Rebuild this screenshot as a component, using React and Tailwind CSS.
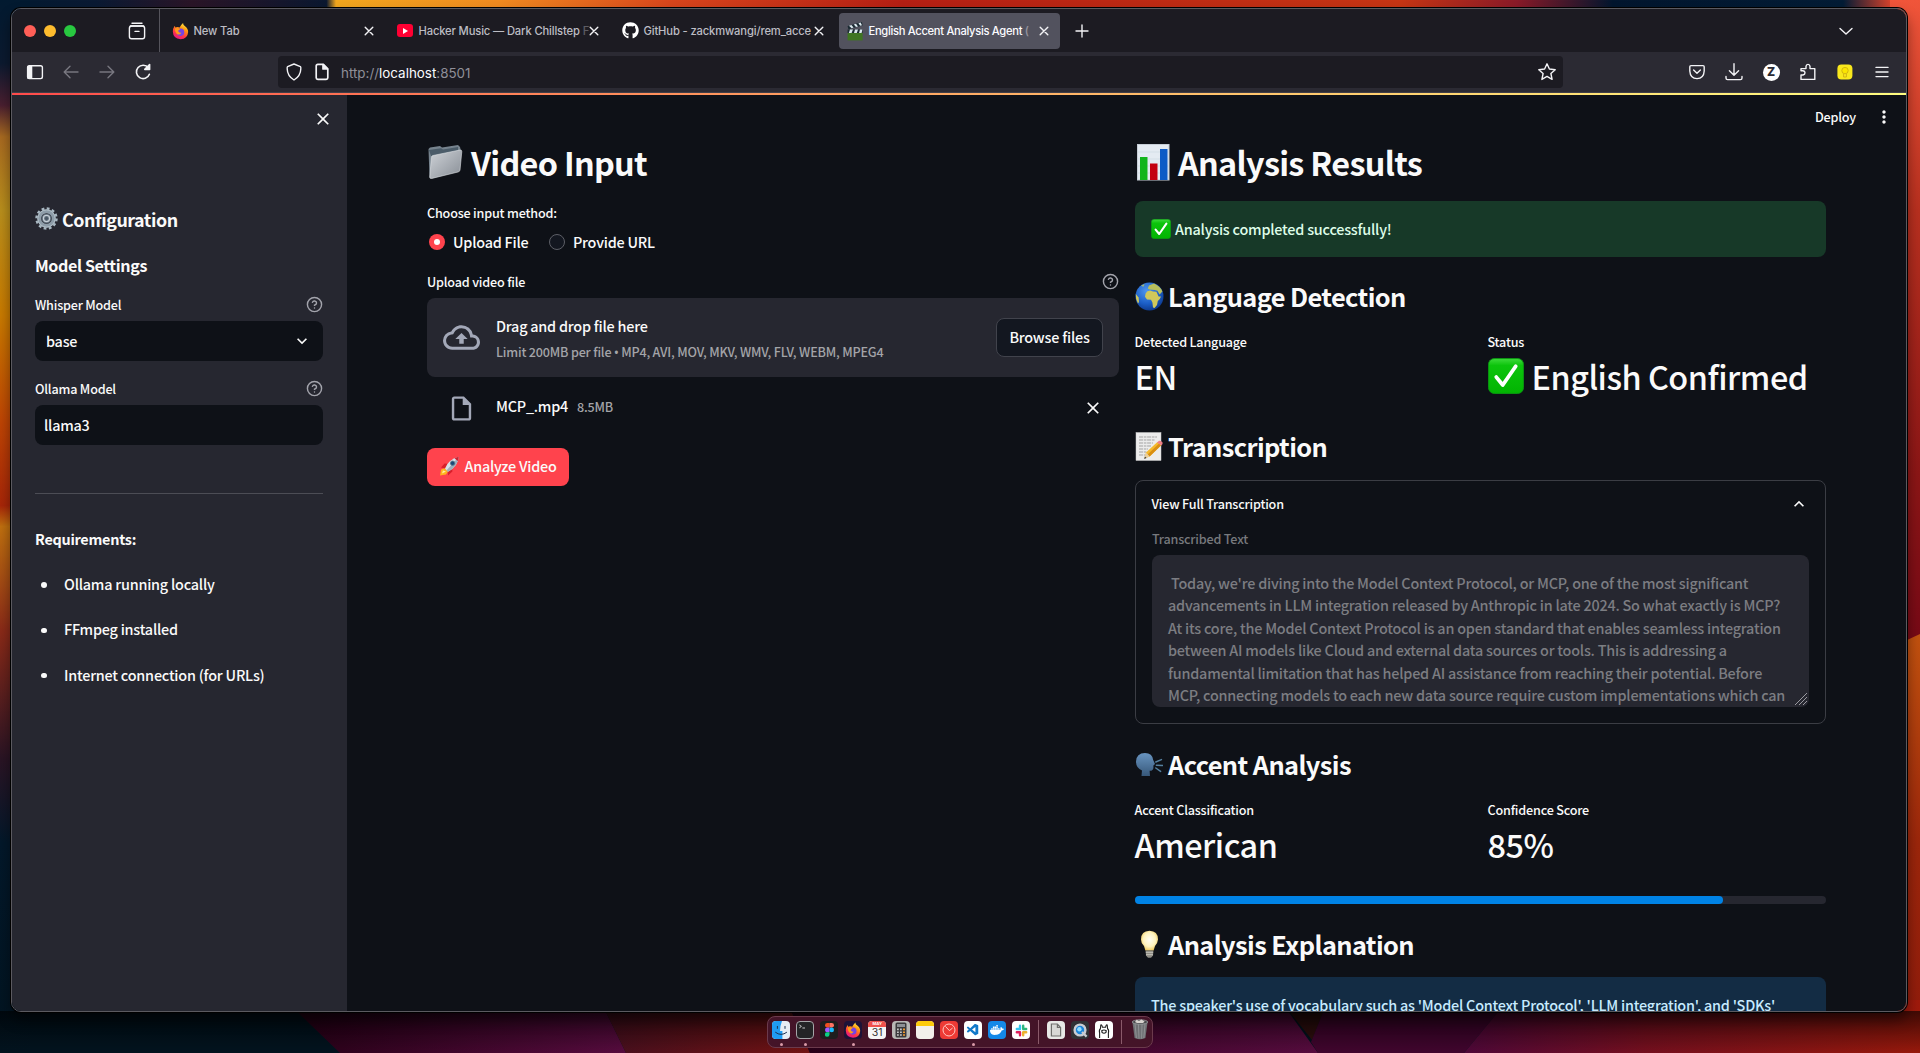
import React from "react";
import { FaGithub } from "react-icons/fa";
import { FiHelpCircle } from "react-icons/fi";
import { MdOutlineCloudUpload, MdOutlineInsertDriveFile, MdClose, MdMoreVert, MdExpandMore, MdExpandLess } from "react-icons/md";
import { SiDocker } from "react-icons/si";
import { VscVscode } from "react-icons/vsc";

/* ---------- emoji drawings ---------- */
const Gear = () => (
  <svg width="23" height="23" viewBox="0 0 24 24" className="shrink-0">
    <circle cx="12" cy="12" r="10.4" fill="none" stroke="#a9b8c2" strokeWidth="2.6" strokeDasharray="2.9 2.54" />
    <circle cx="12" cy="12" r="7.6" fill="none" stroke="#8d9ca8" strokeWidth="4.2" />
    <circle cx="12" cy="12" r="9" fill="none" stroke="#b4c1ca" strokeWidth="1" />
    <circle cx="12" cy="12" r="5" fill="#5f6e7b" />
    <circle cx="12" cy="12" r="3.2" fill="none" stroke="#c5ced6" strokeWidth="1.3" />
    <circle cx="12" cy="12" r="1.5" fill="#4a5764" />
  </svg>
);
const Folder = () => (
  <svg width="36" height="36" viewBox="0 0 36 36" className="shrink-0">
    <defs>
      <linearGradient id="fo" x1="0" y1="0" x2="1" y2="1">
        <stop offset="0" stopColor="#cfd3d8" />
        <stop offset="1" stopColor="#878d95" />
      </linearGradient>
    </defs>
    <path d="M1.5 5 L3 3.4 L13 2 L15 3.6 L31 1 L33 3 L34 7 L4 33 L2.5 34 Z" fill="#76838e" />
    <path d="M2 6 L14 4.2 L16 5.6 L31 3 L31 8 L4 12 Z" fill="#4b5c69" />
    <path d="M6 11.5 L33 6 Q35 5.8 34.8 7.6 L33 26 Q32.8 27.6 31 28 L5 34.4 Q2.6 35 2.8 33 L4.4 13.4 Q4.6 11.8 6 11.5 Z" fill="url(#fo)" stroke="#dfe3e6" strokeWidth=".6" />
  </svg>
);
const Chart = () => (
  <svg width="33" height="37" viewBox="0 0 33 37" className="shrink-0">
    <rect x="0.5" y="0.5" width="31.5" height="35.5" fill="#e4ebf2" stroke="#c6ced6" />
    <path d="M1 8H32M1 15H32M1 22H32M1 29H32" stroke="#cfdae4" strokeWidth=".7" />
    <rect x="3" y="13" width="7.5" height="23" fill="#12b51c" />
    <rect x="13" y="19.5" width="7.5" height="16.5" fill="#c3000f" />
    <rect x="23" y="5" width="7.5" height="31" fill="#0c5bc6" />
  </svg>
);
const Check = ({ className }) => (
  <svg viewBox="0 0 20 20" className={className}>
    <defs>
      <linearGradient id="ck" x1="0" y1="0" x2="0" y2="1">
        <stop offset="0" stopColor="#3fdb3c" />
        <stop offset=".2" stopColor="#0cc40c" />
        <stop offset="1" stopColor="#02b402" />
      </linearGradient>
    </defs>
    <rect x=".3" y=".3" width="19.4" height="19.4" rx="3.2" fill="url(#ck)" stroke="#0a9a12" strokeWidth=".5" />
    <path d="M4.6 10.6 L8.2 15 L15.4 4.6" fill="none" stroke="#fff" strokeWidth="2.1" strokeLinecap="round" strokeLinejoin="round" />
  </svg>
);
const Globe = () => (
  <svg width="29" height="29" viewBox="0 0 29 29" className="shrink-0">
    <defs>
      <radialGradient id="gl" cx=".4" cy=".3" r=".75">
        <stop offset="0" stopColor="#4f97ee" />
        <stop offset=".6" stopColor="#1c5fc8" />
        <stop offset="1" stopColor="#0c3688" />
      </radialGradient>
    </defs>
    <circle cx="14.5" cy="14.5" r="14" fill="url(#gl)" />
    <path d="M10.6 11.4 Q12 8.8 15 8.6 L18 9.6 L21.4 9.8 L23.6 14.4 L26 14.6 Q25.2 17.4 22.8 19 L22 23 L19.6 26 L18 25.6 L17.4 20.4 L16 17.8 L12 17.6 L10 14.8 Z" fill="#d0c85a" />
    <path d="M14 3.4 L19 1.6 Q25 4 27.4 9.4 L24.6 12.6 L22.4 8.8 L19.6 8 L14.6 7.6 L12.8 6.6 Z" fill="#b9c05c" />
    <path d="M.8 12 L3.6 15.6 L4 20 L3 21.4 Q.4 17 .8 12 Z" fill="#d0c85a" />
    <path d="M6 3.8 L9.6 2 L8.4 4.8 Z" fill="#a9bd6e" />
  </svg>
);
const Memo = () => (
  <svg width="28" height="29" viewBox="0 0 28 29" className="shrink-0">
    <rect x="1" y=".5" width="25" height="28" fill="#ececec" stroke="#c9c9c9" strokeWidth=".5" />
    <path d="M4 5H22M4 8H20M4 11H18M4 14H16M4 17H13M4 20H12M4 23H10" stroke="#a3a3a3" strokeWidth="1" strokeDasharray="4 .8 2.6 .7" />
    <path d="M9.4 26.6 L11 20.6 L22.4 10 L26 13.6 L14.6 24.6 Z" fill="#f5b92d" />
    <path d="M12.6 22.6 L24 11.6 L26 13.6 L14.6 24.6 Z" fill="#d98f13" />
    <path d="M22 10.4 L24 8.8 Q26 8.4 27.6 10.4 Q28 12 26.4 13.6 Z" fill="#ee7f86" />
    <path d="M9.4 26.6 L11 20.6 L14.6 24.6 Z" fill="#e9cfa0" />
    <path d="M9.2 27 L9.9 24.4 L11.5 25.9 Z" fill="#333" />
  </svg>
);
const Speaking = () => (
  <svg width="28" height="25" viewBox="0 0 28 25" className="shrink-0">
    <defs>
      <linearGradient id="sp" x1="0" y1="0" x2="0" y2="1">
        <stop offset="0" stopColor="#6894c0" />
        <stop offset="1" stopColor="#37587a" />
      </linearGradient>
    </defs>
    <path d="M6.5 24 L7 18.6 Q1 16 1 9.6 Q1.4 1 10 1 Q17.4 1.2 18.2 8 L20 12 L18.4 13.4 L18.4 16 Q18 19 14.6 18.8 L15 24 Z" fill="url(#sp)" />
    <path d="M20.8 10 L26.4 7.6 M21.4 13.2 L27.6 13.4 M20.8 16 L25.6 19.4" stroke="#55809f" strokeWidth="1.5" strokeLinecap="round" />
  </svg>
);
const Bulb = () => (
  <svg width="19" height="29" viewBox="0 0 19 29" className="shrink-0">
    <defs>
      <radialGradient id="bu" cx=".5" cy=".45" r=".6">
        <stop offset="0" stopColor="#fffef4" />
        <stop offset=".6" stopColor="#fff3bd" />
        <stop offset="1" stopColor="#ecc350" />
      </radialGradient>
    </defs>
    <path d="M9.5 .8 Q18 1.2 18 9.4 Q17.6 13.4 15 16 L13.6 20.4 H5.4 L4 16 Q1 13.4 1 9.4 Q1 1.2 9.5 .8Z" fill="url(#bu)" />
    <path d="M5.6 20.4 H13.4 L13 25.6 L11 27.8 H8 L6 25.6 Z" fill="#8f8d86" />
    <path d="M5.8 22.4H13.2M6 24.6H13" stroke="#cbc9c0" strokeWidth=".8" />
  </svg>
);
const Rocket = () => (
  <svg width="21" height="20" viewBox="0 0 21 20" className="shrink-0">
    <path d="M1 19.6 L2.2 13.4 L6 12 L9 15.6 L7 18.6 Z" fill="#ffb41f" />
    <path d="M3 17.6 L4 14.4 L7 15.6 Z" fill="#fff0a0" />
    <path d="M2 11.6 L5.6 7.6 L9.4 7.8 L6.4 12.4 Z M9 19.4 L13.4 15.6 L13.2 11.6 L8.8 15 Z" fill="#d81f2b" />
    <path d="M6 12.6 Q9 3.6 19.8 .8 Q18.8 10.6 9 15.8 Z" fill="#d8e2ea" />
    <path d="M9 15.8 Q18.8 10.6 19.8 .8 L7.6 14.2Z" fill="#9fb0bd" />
    <path d="M15.6 2.4 Q18 1 19.8 .8 Q19.6 3 18.8 5 Z" fill="#c92332" />
    <circle cx="13.6" cy="7.2" r="2.2" fill="#1b4a78" stroke="#64798a" strokeWidth=".8" />
  </svg>
);

/* ---------- app marks ---------- */
const Firefox = ({ className, id }) => (
  <svg viewBox="0 0 20 20" className={className}>
    <defs>
      <linearGradient id={id} x1=".8" y1="0" x2=".3" y2="1">
        <stop offset="0" stopColor="#fff44f" />
        <stop offset=".35" stopColor="#ff980e" />
        <stop offset=".7" stopColor="#ff3647" />
        <stop offset="1" stopColor="#e31587" />
      </linearGradient>
    </defs>
    <path d="M13 .6 Q13 3 15 4.2 Q19 7 19 11.2 Q18.4 19.4 10 19.6 Q1.4 19.2 1 11 Q.8 7 3.2 3.8 L4 6 L6 5.2 Q8 5 9 6 Q10.6 2.6 13 .6Z" fill={`url(#${id})`} />
    <circle cx="10" cy="11.4" r="4.4" fill="#7543e5" />
    <path d="M3.4 7 Q7 5.6 9.6 8.2 Q7.6 8.6 7.2 10 Q8 12.6 11 12 Q9.6 15 6.6 14 Q3.4 12 3.4 7Z" fill="#ff9a1a" />
  </svg>
);
const Clapper = () => (
  <svg width="16" height="20" viewBox="0 0 16 20" className="shrink-0">
    <path d="M.6 5 L15 1 L15.6 4.4 L1.4 8.2 Z" fill="#1c2b33" />
    <path d="M2 4.8 L4.6 7.2 L6.6 6.6 L4.4 4 Z M6.8 3.4 L9 6 L11 5.4 L9 2.8 Z M11.4 2.2 L13.2 4.8 L15 4.2 L13.6 1.6 Z" fill="#dbe8ee" />
    <path d="M.6 8.4 H15.6 V12 H.6 Z" fill="#1c2b33" />
    <path d="M3 8.4 H6 L4.6 12 H1.8 Z M8 8.4 H11 L9.8 12 H7 Z M13 8.4 H15.4 L14.6 12 H12 Z" fill="#dbe8ee" />
    <rect x=".6" y="12" width="15" height="7.4" fill="#3f7522" />
  </svg>
);

/* ---------- browser chrome ---------- */
const Stroke = ({ size = 20, children, color = "#f3f3f6", w = 1.4 }) => (
  <svg width={size} height={size} viewBox="0 0 20 20" fill="none" stroke={color} strokeWidth={w} strokeLinecap="round" strokeLinejoin="round" className="shrink-0">
    {children}
  </svg>
);
const X = ({ s = 12 }) => (
  <svg width={s} height={s} viewBox="0 0 12 12" className="shrink-0" stroke="#f3f3f6" strokeWidth="1.4" strokeLinecap="round">
    <path d="M2.2 2.2 L9.8 9.8 M9.8 2.2 L2.2 9.8" />
  </svg>
);
const Tab = ({ icon, title, fade, active, className = "" }) => (
  <div className={`flex h-9 shrink-0 items-center rounded-[4px] ${active ? "w-[221px] bg-[#52525e] pl-2 pr-[10px]" : "w-[225px] pl-[9px] pr-[13px]"} ${className}`}>
    <span className="flex w-4 shrink-0 justify-center">{icon}</span>
    <span
      className={`ml-[5.5px] min-w-0 flex-1 whitespace-nowrap text-[11.2px] font-medium leading-5 ${
        active ? "tracking-[-0.028em] text-[#fbfbfe]" : "tracking-[-0.012em] text-[#bdbdc4]"
      }`}
    >
      {title}
      {fade && <span className="opacity-40">{fade}</span>}
    </span>
    <X />
  </div>
);

const TabBar = () => (
  <div className="flex h-[43px] items-center bg-[#1c1b22] font-[Inter,sans-serif]">
    <div className="ml-3 flex gap-[8px]">
      <i className="size-3 rounded-full bg-[#ff5f57]" />
      <i className="size-3 rounded-full bg-[#febc2e]" />
      <i className="size-3 rounded-full bg-[#28c840]" />
    </div>
    <div className="ml-[51px] flex w-5 justify-center">
      <Stroke>
        <path d="M5 2.2 H15 M3.4 5 H16.6" />
        <rect x="2.4" y="5" width="15.2" height="12.8" rx="2.2" />
        <path d="M8 10.4 H12" />
      </Stroke>
    </div>
    <div className="ml-[12px] h-full w-px bg-[#55545c]" />
    <div className="flex items-center pl-[4px]">
      <Tab title="New Tab" icon={<Firefox id="fx1" className="h-5 w-[17px] shrink-0" />} className="ml-[-1px]" />
      <Tab
        title="Hacker Music — Dark Chillstep"
        fade={" F"}
        icon={
          <span className="flex h-[13px] w-4 shrink-0 items-center justify-center rounded-[3px] bg-[#ff0033]">
            <svg width="5" height="6" viewBox="0 0 5 6"><path d="M0 0 L5 3 L0 6Z" fill="#fff" /></svg>
          </span>
        }
      />
      <Tab title="GitHub - zackmwangi/rem_acce" icon={<FaGithub size={17} color="#fff" className="shrink-0" />} />
      <Tab active title="English Accent Analysis Agent" fade=" (" icon={<Clapper />} className="ml-px" />
    </div>
    <div className="ml-3">
      <Stroke><path d="M10 4 V16 M4 10 H16" /></Stroke>
    </div>
    <div className="ml-auto mr-[50px]">
      <Stroke><path d="M4 7.4 L10 13 L16 7.4" /></Stroke>
    </div>
  </div>
);

const Toolbar = () => (
  <div className="flex h-10 items-center bg-[#2b2a33] font-[Inter,sans-serif]">
    <div className="flex w-[266px] shrink-0 items-center gap-[16px] pl-[13px]">
      <Stroke>
        <rect x="2.6" y="3.8" width="14.8" height="12.8" rx="1.8" />
        <path d="M3 4.4 H6.6 V16 H3 Z" fill="#f3f3f6" />
      </Stroke>
      <Stroke color="#77767f"><path d="M17 10 H3.4 M9 4.2 L3.2 10 L9 15.8" /></Stroke>
      <Stroke color="#77767f"><path d="M3 10 H16.6 M11 4.2 L16.8 10 L11 15.8" /></Stroke>
      <Stroke w={1.6}>
        <path d="M16.4 12.2 A6.7 6.7 0 1 1 15.4 5.8" />
        <path d="M16.6 2.6 V7.4 H11.8 Z" fill="#f3f3f6" />
      </Stroke>
    </div>
    <div className="flex h-8 w-[1285px] shrink-0 items-center rounded-[4px] bg-[#1c1b22] pl-[6px] pr-[6px]">
      <Stroke><path d="M10 2 L16.4 4.6 Q17 5 16.8 7 Q16.6 14 10 18 Q3.4 14 3.2 7 Q3 5 3.6 4.6 Z" /></Stroke>
      <span className="w-2" />
      <Stroke w={1.7}>
        <path d="M5.8 2.4 H11.4 L15.8 6.8 V15.8 Q15.8 17.4 14.2 17.4 H5.8 Q4.2 17.4 4.2 15.8 V4 Q4.2 2.4 5.8 2.4 Z" />
        <path d="M11 2.6 V7 H15.4 Z" fill="#f3f3f6" />
      </Stroke>
      <span className="ml-[9px] mt-0.5 flex-1 whitespace-nowrap text-[13.4px] leading-5 text-[#8f8f98]">
        http://<span className="text-[#fbfbfe]">localhost</span>:8501
      </span>
      <Stroke><path d="M10 1.8 L12.4 7 L18.2 7.7 L13.9 11.5 L15.1 17.4 L10 14.4 L4.9 17.4 L6.1 11.5 L1.8 7.7 L7.6 7 Z" /></Stroke>
    </div>
    <div className="ml-auto mr-[14px] flex items-center gap-[17px]">
      <Stroke>
        <path d="M4 3.6 H16 Q17.2 3.6 17.2 4.8 V9 Q16.8 16.4 10 16.6 Q3.2 16.4 2.8 9 V4.8 Q2.8 3.6 4 3.6 Z M6.6 8 L10 11.2 L13.4 8" />
      </Stroke>
      <Stroke><path d="M10 1.8 V13 M5.4 8.8 L10 13.2 L14.6 8.8 M2 14.4 V16 Q2 17.6 3.6 17.6 H16.4 Q18 17.6 18 16 V14.4" /></Stroke>
      <span className="mx-[1.5px] flex size-[17px] items-center justify-center rounded-full bg-white text-[12px] font-extrabold leading-none text-[#2b2a33]">Z</span>
      <Stroke>
        <path d="M3 17.4 V13 H5 Q7 12.6 7 10.8 Q7 9 5 8.8 H3 V6.6 H8 V4.4 Q8.2 2.4 10 2.4 Q11.8 2.4 12 4.4 V6.6 H16.8 V17.4 Z" />
      </Stroke>
      <svg width="20" height="20" viewBox="0 0 20 20">
        <rect x="2.4" y="2.4" width="15" height="15" rx="4" fill="#f9e81c" />
        <circle cx="10" cy="8.6" r="3.2" fill="#fbe500" stroke="#d3b512" strokeWidth="1" />
        <path d="M8.6 12 V15 H11.4 V12" fill="none" stroke="#d3b512" strokeWidth="1" />
      </svg>
      <Stroke><path d="M4 5.4 H16 M4 10 H16 M4 14.6 H16" /></Stroke>
    </div>
  </div>
);

/* ---------- page ---------- */
const Help = () => <FiHelpCircle size={17} className="mt-[-1px] shrink-0 text-[#a3a4ac]" />;

const Sidebar = () => (
  <aside className="flex w-[335px] shrink-0 flex-col bg-[#262730] pl-[23px] pr-6">
    <div className="mt-[14px] flex h-5 justify-end">
      <MdClose size={20} className="mr-[-10px] text-[#fafafa]" />
    </div>
    <h2 className="mt-[75px] flex h-7 items-center whitespace-nowrap text-[17.9px] font-bold leading-7">
      <Gear />
      <span className="ml-1 mt-0.5 tracking-[-0.026em]!">Configuration</span>
    </h2>
    <h3 className="mt-[21px] flex h-6 items-center text-[16.1px] font-bold leading-6 tracking-[-0.024em]!">Model Settings</h3>
    <div className="mt-[18px] flex h-5 items-center justify-between text-[12.6px]">
      <span>Whisper Model</span>
      <Help />
    </div>
    <div className="mt-[6px] flex h-10 items-center justify-between rounded-lg bg-[#0e1117] pl-[11px] pr-[11px] text-[14.4px]">
      <span>base</span>
      <MdExpandMore size={20} />
    </div>
    <div className="mt-[18px] flex h-5 items-center justify-between text-[12.6px]">
      <span>Ollama Model</span>
      <Help />
    </div>
    <div className="mt-[6px] flex h-10 items-center rounded-lg bg-[#0e1117] pl-[9px] text-[14.4px]"><span>llama3</span></div>
    <div className="mt-12 h-px bg-[#4c4d55]" />
    <p className="mt-[33px] flex h-6 items-center text-[14.4px] font-bold tracking-[-0.018em]!">Requirements:</p>
    <ul className="mt-[21px] flex flex-col gap-[21.3px] text-[14.4px] leading-6">
      {["Ollama running locally", "FFmpeg installed", "Internet connection (for URLs)"].map((t) => (
        <li key={t} className="flex h-6 items-center pl-[6px]">
          <i className="mr-[17.5px] mt-0.5 size-[5.5px] rounded-full bg-[#fafafa]" />
          {t}
        </li>
      ))}
    </ul>
  </aside>
);

const VideoInput = () => (
  <section className="w-[692px] shrink-0">
    <h1 className="flex h-11 items-center whitespace-nowrap text-[32.4px] font-bold leading-[44px]">
      <Folder />
      <span className="ml-[8px] tracking-[-0.022em]!">Video Input</span>
    </h1>
    <p className="mt-[19px] flex h-5 items-center text-[12.6px]">Choose input method:</p>
    <div className="mt-[7px] flex h-6 items-center text-[14.4px]">
      <span className="ml-[2px] flex size-4 items-center justify-center rounded-full bg-[#ff434d]">
        <i className="size-[6px] rounded-full bg-white" />
      </span>
      <span className="ml-2 w-[96px]">Upload File</span>
      <span className="size-4 rounded-full border border-[#5d5f67] bg-[#131720]" />
      <span className="ml-2">Provide URL</span>
    </div>
    <div className="mt-[18px] flex h-5 items-center justify-between text-[12.6px]">
      <span>Upload video file</span>
      <Help />
    </div>
    <div className="mt-[6px] flex h-[79px] items-center rounded-lg bg-[#262730] px-4">
      <MdOutlineCloudUpload size={37} className="mt-[-1px] shrink-0 text-[#a3a8b8]" />
      <div className="ml-4 flex-1">
        <p className="flex h-6 items-center text-[14.4px]">Drag and drop file here</p>
        <p className="mt-1 h-5 whitespace-nowrap text-[12.6px] leading-5 text-[#a3a4a8]">
          Limit 200MB per file <span className="font-['Noto_Sans']">•</span> MP4, AVI, MOV, MKV, WMV, FLV, WEBM, MPEG4
        </p>
      </div>
      <button className="flex h-[39px] w-[107px] items-center justify-center whitespace-nowrap rounded-lg border border-[#41434c] bg-[#131720] pb-0.5 text-[14.4px]">
        Browse files
      </button>
    </div>
    <div className="mt-[11px] flex h-10 items-center pl-[20px] pr-4">
      <MdOutlineInsertDriveFile size={29} className="shrink-0 text-[#a3a8b8]" />
      <span className="ml-5 mt-[-4px] text-[14.4px]">MCP_.mp4</span>
      <span className="ml-[9px] mt-[-2px] text-[12.6px] text-[#a3a4a8]">8.5MB</span>
      <MdClose size={20} className="ml-auto" />
    </div>
    <button className="mt-5 flex h-[38px] w-[142px] items-center justify-center whitespace-nowrap rounded-lg bg-[#ff434d] pb-0.5 text-[14.4px]">
      <Rocket />
      <span className="ml-1">Analyze Video</span>
    </button>
  </section>
);

const Heading = ({ icon, children, className = "" }) => (
  <h2 className={`flex h-[34px] items-center whitespace-nowrap text-[25.4px] font-bold leading-[34px] ${className}`}>
    <span className="flex w-7 shrink-0 justify-center">{icon}</span>
    <span className="ml-[5px] tracking-[-0.024em]!">{children}</span>
  </h2>
);
const Metric = ({ label, children }) => (
  <div className="w-[353px] shrink-0 whitespace-nowrap">
    <p className="ml-[-0.5px] flex h-5 items-center text-[12.6px]">{label}</p>
    <p className="ml-[-0.5px] flex h-12 items-center text-[32.4px] leading-[48px]">{children}</p>
  </div>
);

const transcript = [
  "\u00a0Today, we're diving into the Model Context Protocol, or MCP, one of the most significant",
  "advancements in LLM integration released by Anthropic in late 2024. So what exactly is MCP?",
  "At its core, the Model Context Protocol is an open standard that enables seamless integration",
  "between AI models like Cloud and external data sources or tools. This is addressing a",
  "fundamental limitation that has helped AI assistance from reaching their potential. Before",
  "MCP, connecting models to each new data source require custom implementations which can",
];

const Results = () => (
  <section className="w-[691px] shrink-0">
    <h1 className="flex h-11 items-center whitespace-nowrap text-[32.4px] font-bold leading-[44px]">
      <span className="ml-[2px]"><Chart /></span>
      <span className="ml-[8px] tracking-[-0.022em]!">Analysis Results</span>
    </h1>
    <div className="mt-[17px] flex h-14 items-center rounded-lg bg-[#173928] px-4 text-[14.4px] text-[#dffde9]">
      <Check className="size-5 shrink-0" />
      <span className="ml-1 mt-[-1px]">Analysis completed successfully!</span>
    </div>
    <Heading icon={<Globe />} className="mt-[22px]">Language Detection</Heading>
    <div className="mt-[19px] flex">
      <Metric label="Detected Language">EN</Metric>
      <Metric label="Status">
        <Check className="size-9 shrink-0" />
        <span className="ml-2">English Confirmed</span>
      </Metric>
    </div>
    <Heading icon={<Memo />} className="mt-[29px]">Transcription</Heading>
    <div className="mt-[17px] h-[244px] rounded-lg border border-[#3b3d44] px-4">
      <div className="flex h-[46px] items-center justify-between text-[12.6px]">
        <span className="ml-[-0.5px]">View Full Transcription</span>
        <MdExpandLess size={20} />
      </div>
      <p className="mt-[2px] flex h-5 items-center text-[12.6px] text-[#77797d]">Transcribed Text</p>
      <div className="relative mt-[6px] h-[152px] overflow-hidden rounded-lg bg-[#262730] pl-4 pt-[17px] text-[14.4px] leading-[22.4px] text-[#7c7d82]">
        {transcript.map((l) => (
          <p key={l} className="whitespace-nowrap">{l}</p>
        ))}
        <svg className="absolute bottom-0.5 right-0.5" width="12" height="12" viewBox="0 0 12 12" stroke="#9a9aa0" strokeWidth="1">
          <path d="M0 12 L12 0 M4 12 L12 4 M8 12 L12 8" />
        </svg>
      </div>
    </div>
    <Heading icon={<Speaking />} className="mt-[23px]">Accent Analysis</Heading>
    <div className="mt-[19px] flex">
      <Metric label="Accent Classification">American</Metric>
      <Metric label="Confidence Score">85%</Metric>
    </div>
    <div className="mt-7 h-2 rounded-full bg-[#262730]">
      <div className="h-2 w-[85.1%] rounded-full bg-[#0083e6]" />
    </div>
    <Heading icon={<Bulb />} className="mt-[23px]">Analysis Explanation</Heading>
    <div className="mt-4 h-[120px] rounded-lg bg-[#132c44] px-4 pt-[16px] text-[14.4px] leading-6 text-[#c7ebff]">
      <p className="whitespace-nowrap">The speaker's use of vocabulary such as 'Model Context Protocol', 'LLM integration', and 'SDKs'</p>
    </div>
  </section>
);

/* ---------- desktop ---------- */
const Wallpaper = () => (
  <svg className="absolute inset-0" width="1920" height="1053" viewBox="0 0 1920 1053" preserveAspectRatio="none">
    <defs>
      <linearGradient id="wt" x1="0" x2="1920" y1="0" y2="0" gradientUnits="userSpaceOnUse">
        <stop offset="0" stopColor="#021a30" />
        <stop offset=".05" stopColor="#0a1a33" />
        <stop offset=".1" stopColor="#2a1527" />
        <stop offset=".17" stopColor="#0b1830" />
        <stop offset=".175" stopColor="#f2a71e" />
        <stop offset=".26" stopColor="#ef8a20" />
        <stop offset=".35" stopColor="#d8451c" />
        <stop offset=".47" stopColor="#b51f14" />
        <stop offset=".73" stopColor="#c63514" />
        <stop offset=".79" stopColor="#8a1a28" />
        <stop offset=".84" stopColor="#02162e" />
        <stop offset=".96" stopColor="#031c35" />
        <stop offset=".985" stopColor="#d9432c" />
        <stop offset="1" stopColor="#f0553a" />
      </linearGradient>
      <linearGradient id="wl" x1="0" x2="0" y1="0" y2="1">
        <stop offset="0" stopColor="#021a30" />
        <stop offset=".06" stopColor="#0c1a30" />
        <stop offset=".1" stopColor="#4a1f30" />
        <stop offset=".13" stopColor="#a86a20" />
        <stop offset=".2" stopColor="#b98f1c" />
        <stop offset=".3" stopColor="#c97a00" />
        <stop offset=".4" stopColor="#bf4504" />
        <stop offset=".48" stopColor="#a82608" />
        <stop offset=".5" stopColor="#c0700f" />
        <stop offset=".6" stopColor="#8a2a18" />
        <stop offset=".72" stopColor="#2a1424" />
        <stop offset=".8" stopColor="#03182a" />
        <stop offset="1" stopColor="#021420" />
      </linearGradient>
      <linearGradient id="wr" x1="0" x2="0" y1="0" y2="1">
        <stop offset="0" stopColor="#f0553a" />
        <stop offset=".2" stopColor="#b8301f" />
        <stop offset=".45" stopColor="#8c1616" />
        <stop offset=".6" stopColor="#780a16" />
      </linearGradient>
      <linearGradient id="wo" x1="0" x2="0" y1="0" y2="1">
        <stop offset="0" stopColor="#c2520f" />
        <stop offset=".5" stopColor="#9c260b" />
        <stop offset="1" stopColor="#8f1a0c" />
      </linearGradient>
      <linearGradient id="wp" x1="0" x2="1" y1="0" y2="0">
        <stop offset="0" stopColor="#2a0018" />
        <stop offset="1" stopColor="#5c0c42" />
      </linearGradient>
      <linearGradient id="wq" x1="0" x2="1" y1="0" y2="0">
        <stop offset="0" stopColor="#4a1020" />
        <stop offset="1" stopColor="#7a1414" />
      </linearGradient>
      <linearGradient id="ws" x1="0" x2="1" y1="0" y2="0">
        <stop offset="0" stopColor="#54083c" />
        <stop offset=".4" stopColor="#7c1020" />
        <stop offset="1" stopColor="#a01a0c" />
      </linearGradient>
      <linearGradient id="sh" x1="0" x2="0" y1="0" y2="1">
        <stop offset="0" stopColor="#000" stopOpacity=".6" />
        <stop offset="1" stopColor="#000" stopOpacity=".05" />
      </linearGradient>
    </defs>
    <rect width="1920" height="1053" fill="#021420" />
    <rect width="1920" height="40" fill="url(#wt)" />
    <rect width="30" height="1053" fill="url(#wl)" />
    <rect x="1890" width="30" height="1053" fill="url(#wr)" />
    <path d="M1890 648 L1920 634 V1053 H1890 Z" fill="url(#wo)" />
    <path d="M285 1000 H600 L626 1053 H340 Z" fill="url(#wp)" />
    <path d="M600 1000 H790 L810 1053 H626 Z" fill="url(#wq)" />
    <path d="M786 1000 H1280 L1318 1053 H810 Z" fill="url(#wp)" />
    <path d="M1280 1000 H1328 L1312 1040 Z" fill="#32100f" />
    <path d="M1328 1000 H1508 L1464 1053 H1318 L1311 1042 Z" fill="#440530" />
    <path d="M1508 1000 H1920 V1053 H1464 Z" fill="url(#ws)" />
    <rect y="1011" width="1920" height="42" fill="url(#sh)" />
  </svg>
);

const DockIcon = ({ className = "", children, dot }) => (
  <div className="relative flex h-full w-[18px] shrink-0 flex-col items-center pt-1">
    <div className={`flex size-[18px] items-center justify-center overflow-hidden rounded-[4px] ${className}`}>{children}</div>
    {dot && <i className="mt-1 size-[3px] rounded-full bg-[#d99aa8]" />}
  </div>
);

const Dock = () => (
  <div className="relative flex h-8 w-[386px] gap-[6px] self-center rounded-[8px] border border-[#6b3a4c] bg-[#441428] px-1 font-[Inter,sans-serif]">
    <DockIcon dot className="bg-[#e8edf4]">
      <svg width="18" height="18" viewBox="0 0 18 18">
        <path d="M0 0 H10 Q8 5 8 10 H10.4 V18 H0Z" fill="#1f9cf5" />
        <path d="M5.4 5.4V7.4M13 5.4V7.4M3.6 11.4 Q9 15.6 14.6 11.4" stroke="#1b3050" strokeWidth="1" fill="none" strokeLinecap="round" />
      </svg>
    </DockIcon>
    <DockIcon dot className="items-start! justify-start! border border-[#a5a5a8] bg-[#242426]">
      <svg width="16" height="16" viewBox="0 0 16 16"><path d="M2.4 3 L4.4 4.4 L2.4 5.8 M5.4 6 H8" stroke="#ddd" strokeWidth=".9" fill="none" /></svg>
    </DockIcon>
    <DockIcon className="bg-[#1e1e1e]">
      <svg width="9" height="14" viewBox="0 0 9 14">
        <path d="M4.5 0 H2.3 A2.3 2.3 0 0 0 2.3 4.6 H4.5Z" fill="#f24e1e" />
        <path d="M4.5 0 H6.7 A2.3 2.3 0 0 1 6.7 4.6 H4.5Z" fill="#ff7262" />
        <path d="M4.5 4.6 H2.3 A2.3 2.3 0 0 0 2.3 9.2 H4.5Z" fill="#a259ff" />
        <circle cx="6.7" cy="6.9" r="2.3" fill="#1abcfe" />
        <path d="M4.5 9.2 H2.3 A2.3 2.3 0 1 0 4.5 11.5Z" fill="#0acf83" />
      </svg>
    </DockIcon>
    <DockIcon dot className="bg-[#1d1238]"><Firefox id="fx2" className="size-[16px]" /></DockIcon>
    <DockIcon className="flex-col justify-start! bg-[#f5f5f5]">
      <span className="flex h-[6px] w-full shrink-0 items-center justify-center bg-[#f0504c] text-[4px] font-bold leading-none text-white">MAY</span>
      <span className="text-[10.5px] leading-[11px] text-[#333]">31</span>
    </DockIcon>
    <DockIcon className="bg-[#b9b9b6]">
      <svg width="12" height="16" viewBox="0 0 12 16">
        <rect x=".5" y=".5" width="11" height="15" rx="1.6" fill="#3a3a3c" />
        <rect x="2" y="2" width="8" height="3" fill="#8d9094" />
        <path d="M2 7.4H8M2 10.2H8M2 13H8" stroke="#c6c6c6" strokeWidth="1.6" strokeDasharray="1.8 1.2" />
        <path d="M8 7.4H10M8 10.2H10M8 13H10" stroke="#f29a2e" strokeWidth="1.6" />
      </svg>
    </DockIcon>
    <DockIcon className="flex-col justify-start! bg-[#f2f0ea]"><span className="h-[5px] w-full shrink-0 bg-[#fecb0a]" /></DockIcon>
    <DockIcon className="bg-[#ee3a35]">
      <svg width="14" height="14" viewBox="0 0 14 14" fill="none" stroke="#ffc9c2" strokeWidth="1"><circle cx="7" cy="7" r="6" /><path d="M3.4 3.4 L7.4 7.6 L10.6 5" /></svg>
    </DockIcon>
    <DockIcon dot className="bg-white"><VscVscode size={14} color="#1279c9" /></DockIcon>
    <DockIcon className="bg-[#1488e8]"><SiDocker size={14} color="#fff" /></DockIcon>
    <DockIcon className="bg-white">
      <svg width="13" height="13" viewBox="0 0 13 13" strokeWidth="2.4" strokeLinecap="round">
        <path d="M5 1.8 V5 M1.8 5 H5" stroke="#36c5f0" />
        <path d="M8.2 1.8 V5 M8.2 5 H11.2" stroke="#2eb67d" />
        <path d="M8.2 8.2 H11.2 M8.2 8.2 V11.2" stroke="#ecb22e" />
        <path d="M5 8.2 V11.2 M1.8 8.2 H5" stroke="#e01e5a" />
      </svg>
    </DockIcon>
    <i className="mx-[2px] mt-[3px] h-6 w-px shrink-0 bg-[#8a5a6a]" />
    <DockIcon className="bg-[#e8e8e6]">
      <svg width="12" height="14" viewBox="0 0 12 14"><path d="M1.4 1 H7.4 L10.6 4.4 V13 H1.4 Z M7.4 1 V4.4 H10.6" fill="#d8d8d5" stroke="#6f6f6c" strokeWidth="1.2" /></svg>
    </DockIcon>
    <DockIcon className="bg-[#303236]">
      <svg width="16" height="16" viewBox="0 0 16 16"><circle cx="8" cy="8" r="5.4" fill="#1b84d8" stroke="#c8ccd2" strokeWidth="2.4" /><circle cx="7.4" cy="7.2" r="2.2" fill="#8fdcff" /><path d="M10 10 L14.6 14.6" stroke="#c8ccd2" strokeWidth="2.2" /></svg>
    </DockIcon>
    <DockIcon className="bg-white">
      <svg width="12" height="16" viewBox="0 0 12 16" fill="none" stroke="#222" strokeWidth="1.1">
        <path d="M1.6 16 V11 Q.8 8 2.4 6.8 L2.8 3 Q4 2.4 4.4 5.2 H7.6 Q8 2.4 9.2 3 L9.6 6.8 Q11.2 8 10.4 11 V16" />
        <ellipse cx="6" cy="9.6" rx="2.2" ry="1.6" />
        <path d="M3.6 8V8.6M8.4 8V8.6" />
      </svg>
    </DockIcon>
    <i className="ml-[1.5px] mt-[3px] h-6 w-px shrink-0 bg-[#8a5a6a]" />
    <div className="pl-[3px] pt-[2px]">
      <svg width="18" height="21" viewBox="0 0 18 21">
        <path d="M1.4 3 H16.6 L14.4 19 Q9 21.6 3.6 19 Z" fill="#6e7073" />
        <path d="M4 5 L5.4 19 M7.4 5 L8 19.6 M11 5 L10.6 19.6 M14 5 L12.8 19" stroke="#97999c" strokeWidth=".8" />
        <ellipse cx="9" cy="3" rx="7.8" ry="2.2" fill="#4b4c4f" stroke="#9b9da0" strokeWidth=".8" />
        <path d="M4 3 L5.6 .8 L8 2 L10.4 .4 L13.6 2.4 L12 4 H6Z" fill="#d8d3cf" />
      </svg>
    </div>
  </div>
);

export default function App() {
  return (
    <div className="relative flex h-[1053px] w-[1920px] flex-col overflow-hidden bg-[#021420]">
      <Wallpaper />
      <div className="relative ml-[11px] mt-2 flex h-[1004px] w-[1896px] shrink-0 flex-col overflow-hidden rounded-[10px] border border-[#5b5a60] shadow-[0_0_0_1px_#000,0_8px_14px_rgba(0,0,0,0.45)]">
        <TabBar />
        <Toolbar />
        <div className="h-px shrink-0 bg-[#3f3e48]" />
        <div className="h-0.5 shrink-0 bg-linear-to-r from-[#ff4b4b] to-[#fffd80]" />
        <div className="flex min-h-0 flex-1 overflow-hidden bg-[#0e1117] font-['Noto_Sans_CJK_SC',sans-serif] font-medium text-[#fafafa] [&_*]:tracking-[-0.015em]">
          <Sidebar />
          <main className="flex flex-1 items-start gap-4 pl-20 pt-[45px]">
            <VideoInput />
            <Results />
            <div className="ml-[-27px] mt-[-35px] flex h-6 items-center text-[12.6px]">
              Deploy
              <MdMoreVert size={20} className="ml-[18px]" />
            </div>
          </main>
        </div>
      </div>
      <div className="ml-[0.5px] mt-1 flex shrink-0 justify-center">
        <Dock />
      </div>
    </div>
  );
}
